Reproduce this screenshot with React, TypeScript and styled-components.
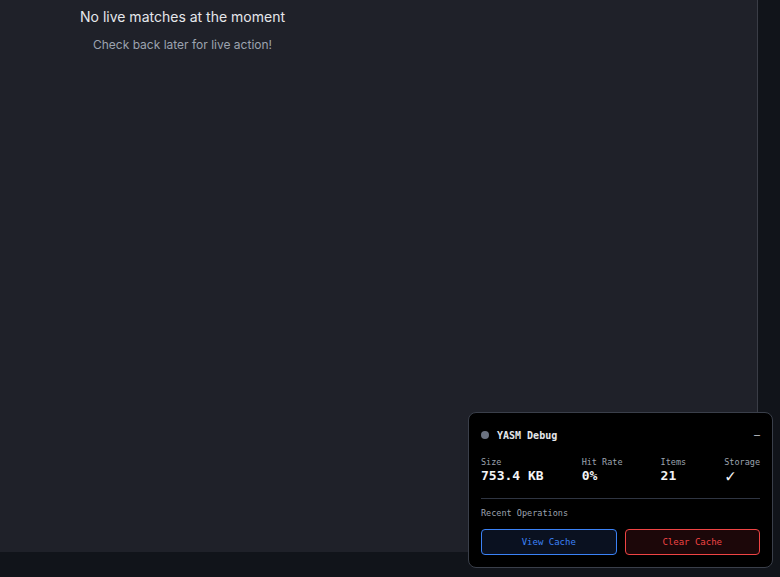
import React, { FC } from 'react'
import styled, { createGlobalStyle } from 'styled-components'

const GlobalStyle = createGlobalStyle`
  * {
    box-sizing: border-box;
  }
  html, body {
    margin: 0;
    padding: 0;
    height: 100%;
    background: #11141a;
    font-family: Inter, "Liberation Sans", sans-serif;
  }
  #root {
    height: 100%;
  }
`

const Page = styled.div`
  display: flex;
  flex-direction: column;
  height: 100vh;
  overflow: hidden;
`

const Body = styled.div`
  display: flex;
  flex: 1;
  min-height: 0;
`

const Main = styled.main`
  flex: 1;
  background: #1f2129;
  border-right: 1px solid #3a3d46;
`

const Rail = styled.aside`
  width: 22px;
  background: #11141a;
`

const Footer = styled.footer`
  height: 25px;
  background: #11141a;
`

const EmptyState = styled.section`
  width: 365px;
  padding-top: 8px;
  display: flex;
  flex-direction: column;
  align-items: center;
  gap: 11px;
`

const EmptyTitle = styled.h3`
  margin: 0;
  font-size: 14px;
  line-height: 18px;
  font-weight: 400;
  color: #e5e7eb;
`

const EmptyText = styled.p`
  margin: 0;
  font-size: 12px;
  line-height: 16px;
  color: #9ca3af;
`

const Panel = styled.div`
  position: fixed;
  right: 7px;
  bottom: 9px;
  width: 305px;
  padding: 12px;
  background: #000;
  border: 1px solid #3a3f4a;
  border-radius: 8px;
  font-family: "DejaVu Sans Mono", "Liberation Mono", monospace;
  color: #e5e7eb;
`

const PanelHead = styled.div`
  display: flex;
  align-items: center;
  height: 20px;
`

const Dot = styled.span`
  width: 8px;
  height: 8px;
  border-radius: 50%;
  background: #6b7280;
  margin-right: 8px;
`

const PanelTitle = styled.span`
  flex: 1;
  font-size: 10px;
  font-weight: 700;
  color: #e5e7eb;
`

const MinButton = styled.button`
  border: none;
  background: none;
  padding: 0;
  color: #d1d5db;
  font-family: inherit;
  font-size: 10px;
  line-height: 1;
  cursor: pointer;
`

const Stats = styled.div`
  display: flex;
  justify-content: space-between;
  margin-top: 11px;
`

const Stat = styled.div`
  display: flex;
  flex-direction: column;
`

const StatLabel = styled.span`
  font-size: 8.5px;
  line-height: 12px;
  color: #9ca3af;
`

interface IStatValue {
    icon?: boolean
}

const StatValue = styled.span<IStatValue>`
  font-size: ${(props) => (props.icon ? '17px' : '13px')};
  line-height: 16px;
  font-weight: 700;
  color: #f3f4f6;
  padding-left: ${(props) => (props.icon ? '1px' : 0)};
`

const Divider = styled.hr`
  border: none;
  border-top: 1px solid #2f3542;
  margin: 14px 0 8px;
`

const SectionLabel = styled.div`
  font-size: 8.5px;
  line-height: 12px;
  color: #9ca3af;
`

const Actions = styled.div`
  display: grid;
  grid-template-columns: 1fr 1fr;
  gap: 8px;
  margin-top: 10px;
`

interface IActionButton {
    tone: 'blue' | 'red'
}

const ActionButton = styled.button<IActionButton>`
  height: 26px;
  border-radius: 4px;
  font-family: inherit;
  font-size: 9px;
  cursor: pointer;
  border: 1px solid ${(props) => (props.tone === 'blue' ? '#3b82f6' : '#ef4444')};
  background: ${(props) => (props.tone === 'blue' ? '#0a1120' : '#1c0709')};
  color: ${(props) => (props.tone === 'blue' ? '#3b82f6' : '#ef4444')};
`

const stats = [
    { label: 'Size', value: '753.4 KB' },
    { label: 'Hit Rate', value: '0%' },
    { label: 'Items', value: '21' },
    { label: 'Storage', value: '✓', icon: true }
]

const DebugPanel: FC = () => (
    <Panel>
        <PanelHead>
            <Dot />
            <PanelTitle>YASM Debug</PanelTitle>
            <MinButton>—</MinButton>
        </PanelHead>
        <Stats>
            {stats.map((s) => (
                <Stat key={s.label}>
                    <StatLabel>{s.label}</StatLabel>
                    <StatValue icon={s.icon}>{s.value}</StatValue>
                </Stat>
            ))}
        </Stats>
        <Divider />
        <SectionLabel>Recent Operations</SectionLabel>
        <Actions>
            <ActionButton tone="blue">View Cache</ActionButton>
            <ActionButton tone="red">Clear Cache</ActionButton>
        </Actions>
    </Panel>
)

const App: FC = () => (
    <Page>
        <GlobalStyle />
        <Body>
            <Main>
                <EmptyState>
                    <EmptyTitle>No live matches at the moment</EmptyTitle>
                    <EmptyText>Check back later for live action!</EmptyText>
                </EmptyState>
            </Main>
            <Rail />
        </Body>
        <Footer />
        <DebugPanel />
    </Page>
)

export default App
